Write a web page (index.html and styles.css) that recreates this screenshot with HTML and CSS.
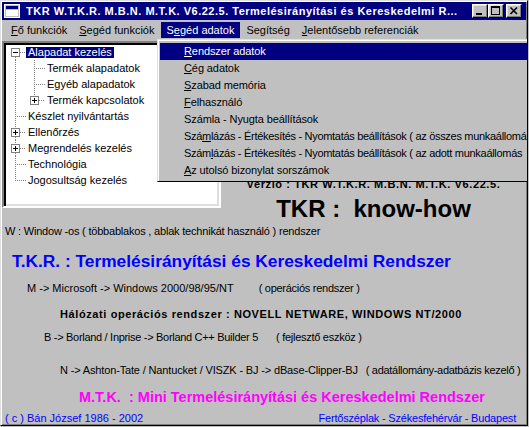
FILE: index.html
```html
<!DOCTYPE html>
<html lang="hu">
<head>
<meta charset="utf-8">
<title>TKR</title>
<link rel="stylesheet" href="styles.css">
</head>
<body>
<div class="window">
  <div class="titlebar">
    <svg class="app-icon" width="16" height="14" viewBox="0 0 16 14">
      <rect x="0.5" y="0.5" width="15" height="13" fill="#c0c0c0" stroke="#ffffff"/>
      <rect x="2" y="2" width="12" height="3" fill="#000080"/>
      <rect x="2" y="6" width="12" height="6" fill="#ffffff"/>
    </svg>
    <span class="title">TKR W.T.K.R. M.B.N. M.T.K. V6.22.5. Termelésirányítási és Kereskedelmi R...</span>
    <div class="caption-buttons">
      <span class="cbtn"><svg width="14" height="12" viewBox="0 0 14 12"><rect x="3" y="8" width="6" height="2" fill="#000"/></svg></span>
      <span class="cbtn"><svg width="14" height="12" viewBox="0 0 14 12"><rect x="2" y="1" width="9" height="2" fill="#000"/><rect x="2" y="1" width="1" height="9" fill="#000"/><rect x="10" y="1" width="1" height="9" fill="#000"/><rect x="2" y="9" width="9" height="1" fill="#000"/></svg></span>
      <span class="cbtn close"><svg width="14" height="12" viewBox="0 0 14 12"><path d="M3.5 2.5 L10 9 M10 2.5 L3.5 9" stroke="#000" stroke-width="1.6"/></svg></span>
    </div>
  </div>

  <div class="menubar">
    <span class="mitem"><u>F</u>ő funkciók</span>
    <span class="mitem"><u>S</u>egéd funkciók</span>
    <span class="mitem active">S<u>e</u>géd adatok</span>
    <span class="mitem">Segítség</span>
    <span class="mitem"><u>J</u>elentősebb referenciák</span>
  </div>

  <div class="client">
    <div class="top-row">
      <div class="tree">
        <div class="trow">
          <svg width="20" height="16" viewBox="0 0 20 16"><g class="dots"><line x1="9.5" y1="13" x2="9.5" y2="16"/><line x1="14" y1="8.5" x2="20" y2="8.5"/></g><rect class="tbox" x="5.5" y="4.5" width="8" height="8"/><rect x="7" y="8" width="5" height="1" fill="#000"/></svg>
          <span class="tlabel sel">Alapadat kezelés</span>
        </div>
        <div class="trow">
          <svg width="39" height="16" viewBox="0 0 39 16"><g class="dots"><line x1="9.5" y1="0" x2="9.5" y2="16"/><line x1="28.5" y1="0" x2="28.5" y2="16"/><line x1="30" y1="8.5" x2="39" y2="8.5"/></g></svg>
          <span class="tlabel">Termék alapadatok</span>
        </div>
        <div class="trow">
          <svg width="39" height="16" viewBox="0 0 39 16"><g class="dots"><line x1="9.5" y1="0" x2="9.5" y2="16"/><line x1="28.5" y1="0" x2="28.5" y2="16"/><line x1="30" y1="8.5" x2="39" y2="8.5"/></g></svg>
          <span class="tlabel">Egyéb alapadatok</span>
        </div>
        <div class="trow">
          <svg width="39" height="16" viewBox="0 0 39 16"><g class="dots"><line x1="9.5" y1="0" x2="9.5" y2="16"/><line x1="28.5" y1="0" x2="28.5" y2="4"/><line x1="33" y1="8.5" x2="39" y2="8.5"/></g><rect class="tbox" x="24.5" y="4.5" width="8" height="8"/><rect x="26" y="8" width="5" height="1" fill="#000"/><rect x="28" y="6" width="1" height="5" fill="#000"/></svg>
          <span class="tlabel">Termék kapcsolatok</span>
        </div>
        <div class="trow">
          <svg width="20" height="16" viewBox="0 0 20 16"><g class="dots"><line x1="9.5" y1="0" x2="9.5" y2="16"/><line x1="11" y1="8.5" x2="20" y2="8.5"/></g></svg>
          <span class="tlabel">Készlet nyilvántartás</span>
        </div>
        <div class="trow">
          <svg width="20" height="16" viewBox="0 0 20 16"><g class="dots"><line x1="9.5" y1="0" x2="9.5" y2="4"/><line x1="9.5" y1="13" x2="9.5" y2="16"/><line x1="14" y1="8.5" x2="20" y2="8.5"/></g><rect class="tbox" x="5.5" y="4.5" width="8" height="8"/><rect x="7" y="8" width="5" height="1" fill="#000"/><rect x="9" y="6" width="1" height="5" fill="#000"/></svg>
          <span class="tlabel">Ellenőrzés</span>
        </div>
        <div class="trow">
          <svg width="20" height="16" viewBox="0 0 20 16"><g class="dots"><line x1="9.5" y1="0" x2="9.5" y2="4"/><line x1="9.5" y1="13" x2="9.5" y2="16"/><line x1="14" y1="8.5" x2="20" y2="8.5"/></g><rect class="tbox" x="5.5" y="4.5" width="8" height="8"/><rect x="7" y="8" width="5" height="1" fill="#000"/><rect x="9" y="6" width="1" height="5" fill="#000"/></svg>
          <span class="tlabel">Megrendelés kezelés</span>
        </div>
        <div class="trow">
          <svg width="20" height="16" viewBox="0 0 20 16"><g class="dots"><line x1="9.5" y1="0" x2="9.5" y2="16"/><line x1="11" y1="8.5" x2="20" y2="8.5"/></g></svg>
          <span class="tlabel">Technológia</span>
        </div>
        <div class="trow">
          <svg width="20" height="16" viewBox="0 0 20 16"><g class="dots"><line x1="9.5" y1="0" x2="9.5" y2="9"/><line x1="11" y1="8.5" x2="20" y2="8.5"/></g></svg>
          <span class="tlabel">Jogosultság kezelés</span>
        </div>
      </div>
      <div class="about-head">
        <div class="version">Verzió : TKR W.T.K.R. M.B.N. M.T.K. V6.22.5.</div>
        <div class="knowhow">TKR :  know-how</div>
      </div>
    </div>

    <div class="line w-line">W : Window -os ( többablakos , ablak technikát használó ) rendszer</div>
    <div class="headline tkr">T.K.R. : Termelésirányítási és Kereskedelmi Rendszer</div>
    <div class="line m-line">M -&gt; Microsoft -&gt; Windows 2000/98/95/NT<span class="note n1">( operációs rendszer )</span></div>
    <div class="line bold-line">Hálózati operációs rendszer : NOVELL NETWARE, WINDOWS NT/2000</div>
    <div class="line b-line">B -&gt; Borland / Inprise -&gt; Borland C++ Builder 5<span class="note n2">( fejlesztő eszköz )</span></div>
    <div class="line n-line">N -&gt; Ashton-Tate / Nantucket / VISZK - BJ -&gt; dBase-Clipper-BJ<span class="note n3">( adatállomány-adatbázis kezelő )</span></div>
    <div class="headline mtk">M.T.K.  : Mini Termelésirányítási és Kereskedelmi Rendszer</div>
    <div class="footer">
      <span>( c ) Bán József 1986 - 2002</span>
      <span class="places">Fertőszéplak - Székesfehérvár - Budapest</span>
    </div>
  </div>

  <div class="dropdown">
    <div class="ditem sel"><u>R</u>endszer adatok</div>
    <div class="ditem"><u>C</u>ég adatok</div>
    <div class="ditem"><u>S</u>zabad memória</div>
    <div class="ditem"><u>F</u>elhasználó</div>
    <div class="ditem">Számla - Nyugta beállítások</div>
    <div class="ditem long">Szá<u>m</u>lázás - Értékesítés - Nyomtatás beállítások ( az összes munkaállomá</div>
    <div class="ditem long">Szám<u>l</u>ázás - Értékesítés - Nyomtatás beállítások ( az adott munkaállomás</div>
    <div class="ditem"><u>A</u>z utolsó bizonylat sorszámok</div>
  </div>
</div>
</body>
</html>
```

FILE: styles.css
```css
* { box-sizing: border-box; }
html, body { margin: 0; padding: 0; }
body {
  width: 529px;
  height: 427px;
  overflow: hidden;
  background: #c0c0c0;
  font-family: "Liberation Sans", Arial, sans-serif;
  font-size: 11px;
  color: #000;
}

.window {
  position: relative;
  width: 528px;
  height: 426px;
  background: #c0c0c0;
  border: 1px solid;
  border-color: #dfdfdf #000 #000 #dfdfdf;
  box-shadow: inset 1px 1px #fff, inset -1px -1px #808080;
  padding: 1px;
  overflow: hidden;
}

/* title bar */
.titlebar {
  height: 18px;
  background: #000080;
  display: flex;
  align-items: center;
  padding: 0 4px 0 2px;
}
.app-icon { flex: none; display: block; margin-right: 6px; }
.title {
  color: #fff;
  font-weight: bold;
  font-size: 11px;
  letter-spacing: 0.5px;
  white-space: nowrap;
}
.caption-buttons { margin-left: auto; display: flex; }
.cbtn {
  width: 16px;
  height: 14px;
  background: #c0c0c0;
  border: 1px solid;
  border-color: #fff #000 #000 #fff;
  box-shadow: inset -1px -1px #808080, inset 1px 1px #dfdfdf;
}
.cbtn svg { display: block; }
.cbtn.close { margin-left: 2px; }

/* menu bar */
.menubar {
  height: 19px;
  display: flex;
  padding: 2px 0 0 3px;
  white-space: nowrap;
}
.mitem {
  height: 16px;
  line-height: 16px;
  padding: 0 6px;
}
.mitem.active { background: #000080; color: #fff; }

/* client */
.client { padding-top: 2px; }
.top-row { display: flex; align-items: flex-start; }

.tree {
  flex: none;
  width: 219px;
  height: 167px;
  background: #fff;
  border: 2px solid;
  border-color: #808080 #fff #fff #808080;
  box-shadow: inset 2px 2px #000, inset -2px -2px #dfdfdf;
  padding: 1px 0 0 2px;
  overflow: hidden;
}
.trow {
  display: flex;
  align-items: center;
  height: 16px;
  white-space: nowrap;
}
.trow svg { flex: none; display: block; }
.dots line { stroke: #808080; stroke-width: 1; stroke-dasharray: 1 1; shape-rendering: crispEdges; }
.tbox { fill: #fff; stroke: #808080; stroke-width: 1; shape-rendering: crispEdges; }
.tlabel {
  height: 11px;
  line-height: 11px;
  padding: 0 2px;
}
.tlabel.sel { background: #000080; color: #fff; }

.about-head {
  flex: 1;
  text-align: center;
  padding-top: 137px;
  white-space: nowrap;
}
.version {
  font-weight: bold;
  line-height: 13px;
  letter-spacing: 0.6px;
}
.knowhow {
  margin-top: 4px;
  font-size: 24px;
  font-weight: bold;
  line-height: 28px;
  white-space: pre;
}

.line {
  line-height: 14px;
  white-space: nowrap;
}
.w-line { margin: 1px 0 0 3px; letter-spacing: -0.2px; }
.headline {
  font-weight: bold;
  white-space: pre;
}
.tkr {
  color: #0000ff;
  font-size: 17.33px;
  line-height: 20px;
  margin: 13px 0 0 10px;
}
.m-line { margin: 10px 0 0 25px; }
.bold-line {
  font-weight: bold;
  letter-spacing: 0.6px;
  margin: 12px 0 0 58px;
}
.b-line { margin: 9px 0 0 42px; letter-spacing: -0.3px; }
.n-line { margin: 19px 0 0 58px; letter-spacing: -0.15px; }
.note { display: inline-block; letter-spacing: -0.27px; }
.n1 { margin-left: 25px; }
.n2 { margin-left: 18px; }
.n3 { margin-left: 8px; letter-spacing: -0.3px; }
.mtk {
  color: #ff00ff;
  font-size: 14.5px;
  line-height: 20px;
  margin: 10px 0 0 77px;
}
.footer {
  display: flex;
  justify-content: space-between;
  color: #0000ff;
  line-height: 14px;
  margin-top: 4px;
  padding: 0 10px 0 3px;
  white-space: nowrap;
}
.places { letter-spacing: -0.2px; }

/* dropdown menu */
.dropdown {
  position: absolute;
  left: 156px;
  top: 38px;
  width: 371px;
  background: #c0c0c0;
  border: 1px solid;
  border-color: #dfdfdf #000 #000 #dfdfdf;
  border-right: 0;
  box-shadow: inset 1px 1px #fff;
  padding: 3px 0 2px 2px;
  z-index: 2;
  letter-spacing: -0.1px;
}
.ditem {
  height: 17px;
  line-height: 17px;
  padding-left: 24px;
  white-space: nowrap;
}
.ditem.long { letter-spacing: -0.3px; }
.ditem.sel { background: #000080; color: #fff; }
```
